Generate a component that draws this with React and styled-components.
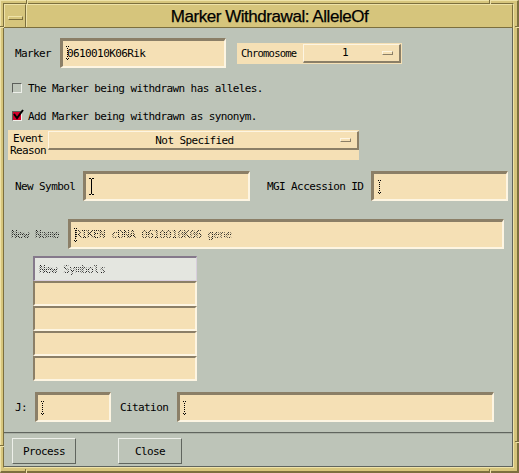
import React from 'react'
import styled, { createGlobalStyle } from 'styled-components'

const sage = '#bdc4b8'
const tan = '#f5e0b5'
const gold = '#d6c57c'
const goldDark = '#7c6f3e'
const goldLight = '#eee2a8'
const bevelDark = '#8b7f67'
const bevelLight = '#fdf5e2'
const sageDark = '#60655e'
const sageLight = '#eef0ea'

const GlobalStyle = createGlobalStyle`
  html, body {
    margin: 0;
    padding: 0;
    background: ${gold};
  }
`

const DottedCaret = () => (
  <svg width="5" height="14" viewBox="0 0 5 14">
    <rect x="1" y="0" width="1" height="1" fill="#000" />
    <rect x="3" y="0" width="1" height="1" fill="#000" />
    {[2, 4, 6, 8, 10].map((y) => (
      <rect key={y} x="2" y={y} width="1" height="1" fill="#000" />
    ))}
    <rect x="1" y="12" width="1" height="1" fill="#000" />
    <rect x="3" y="12" width="1" height="1" fill="#000" />
    <rect x="2" y="13" width="1" height="1" fill="#000" />
  </svg>
)

const SolidCaret = () => (
  <svg width="5" height="17" viewBox="0 0 5 17">
    <rect x="0" y="0" width="2" height="1" fill="#000" />
    <rect x="3" y="0" width="2" height="1" fill="#000" />
    <rect x="2" y="1" width="1" height="15" fill="#000" />
    <rect x="0" y="16" width="2" height="1" fill="#000" />
    <rect x="3" y="16" width="2" height="1" fill="#000" />
  </svg>
)

const CheckMark = () => (
  <svg width="13" height="12" viewBox="0 0 13 12">
    <path d="M2 5 L5 9 L11 1" stroke="#000" strokeWidth="2" fill="none" />
  </svg>
)

const Frame = styled.div`
  position: relative;
  box-sizing: border-box;
  width: 519px;
  height: 473px;
  background: ${gold};
  border-top: 1px solid ${goldLight};
  border-left: 1px solid ${goldLight};
  border-right: 2px solid ${goldDark};
  border-bottom: 2px solid ${goldDark};
  padding: 2px 3px 3px 2px;
`

const Tick = styled.div`
  position: absolute;
  background: ${goldDark};
  box-shadow: 1px 1px 0 ${goldLight};
`

const Inner = styled.div`
  box-sizing: border-box;
  height: 100%;
  border-top: 1px solid ${goldDark};
  border-left: 1px solid ${goldDark};
  border-right: 1px solid ${goldLight};
  border-bottom: 1px solid ${goldLight};
  display: flex;
  flex-direction: column;
`

const TitleBar = styled.div`
  box-sizing: border-box;
  height: 24px;
  flex-shrink: 0;
  display: flex;
  border-bottom: 1px solid ${goldDark};
`

const TitleCell = styled.div`
  box-sizing: border-box;
  width: ${(p) => (p.$w ? `${p.$w}px` : 'auto')};
  flex: ${(p) => (p.$w ? '0 0 auto' : '1')};
  border-top: 1px solid ${goldLight};
  border-left: 1px solid ${goldLight};
  border-right: 1px solid ${goldDark};
  display: flex;
  align-items: center;
  justify-content: center;
`

const MenuGlyph = styled.div`
  box-sizing: border-box;
  width: 15px;
  height: 4px;
  margin-top: 3px;
  border-top: 1px solid ${goldLight};
  border-left: 1px solid ${goldLight};
  border-bottom: 1px solid ${goldDark};
  border-right: 1px solid ${goldDark};
`

const Title = styled.span`
  font-family: 'Liberation Sans', Arial, sans-serif;
  font-size: 17px;
  letter-spacing: -0.45px;
  -webkit-text-stroke: 0.25px #000;
  color: #000;
  padding-top: 1px;
`

const Body = styled.div`
  box-sizing: border-box;
  flex: 1;
  background: ${sage};
  border-right: 1px solid ${sageDark};
  border-bottom: 1px solid ${sageDark};
  display: flex;
  flex-direction: column;
  font-family: 'DejaVu Sans Mono', 'Liberation Mono', monospace;
  font-size: 11px;
  letter-spacing: -0.6px;
  color: #000;
`

const Row = styled.div`
  display: flex;
  align-items: center;
  flex-shrink: 0;
  height: ${(p) => p.$h}px;
  margin-top: ${(p) => p.$mt}px;
  padding-left: ${(p) => p.$pl || 0}px;
`

const Label = styled.span`
  flex-shrink: 0;
  width: ${(p) => p.$w}px;
  margin-left: ${(p) => p.$ml || 0}px;
  white-space: nowrap;
`

const Stipple = styled.span`
  background: repeating-conic-gradient(#111 0 25%, transparent 0 50%) 0 0 / 2px 2px;
  -webkit-background-clip: text;
  background-clip: text;
  color: transparent;
`

const TextField = styled.div`
  position: relative;
  box-sizing: border-box;
  flex-shrink: 0;
  width: ${(p) => p.$w}px;
  height: 30px;
  margin-left: ${(p) => p.$ml || 0}px;
  background: ${tan};
  border-top: 3px solid ${bevelDark};
  border-left: 3px solid ${bevelDark};
  border-bottom: 2px solid ${bevelLight};
  border-right: 2px solid ${bevelLight};
  padding-left: 4px;
  display: flex;
  align-items: center;
  white-space: nowrap;
`

const Caret = styled.div`
  position: absolute;
  left: ${(p) => p.$left}px;
  top: ${(p) => p.$top}px;
  line-height: 0;
`

const OptionBox = styled.div`
  box-sizing: border-box;
  flex-shrink: 0;
  display: flex;
  align-items: center;
  width: 165px;
  height: 21px;
  margin-left: 11px;
  padding: 1px;
  background: ${tan};
`

const OptionLabel = styled.span`
  width: 65px;
  padding-left: 3px;
  box-sizing: border-box;
  font-size: 10.5px;
  letter-spacing: -0.8px;
`

const OptionButton = styled.div`
  box-sizing: border-box;
  display: flex;
  align-items: center;
  flex: 1;
  height: ${(p) => p.$h}px;
  margin-top: ${(p) => p.$mt || 0}px;
  background: ${tan};
  border-top: 1px solid ${bevelLight};
  border-left: 1px solid ${bevelLight};
  border-bottom: 2px solid ${bevelDark};
  border-right: 2px solid ${bevelDark};
`

const OptionValue = styled.span`
  flex: 1;
  text-align: center;
  padding-left: ${(p) => p.$pl || 0}px;
`

const Indicator = styled.div`
  box-sizing: border-box;
  width: 11px;
  height: 4px;
  margin-right: ${(p) => p.$mr}px;
  border-top: 1px solid ${bevelLight};
  border-left: 1px solid ${bevelLight};
  border-bottom: 1px solid ${bevelDark};
  border-right: 1px solid ${bevelDark};
`

const CheckRow = styled.div`
  display: flex;
  align-items: center;
  height: 14px;
  margin-top: ${(p) => p.$mt}px;
  padding-left: 8px;
  white-space: nowrap;
`

const CheckBox = styled.div`
  position: relative;
  box-sizing: border-box;
  width: 10px;
  height: 10px;
  margin-right: 6px;
  flex-shrink: 0;
  background: ${(p) => (p.$on ? '#d4002a' : sage)};
  border-top: 1px solid #5c5f5a;
  border-left: 1px solid #5c5f5a;
  border-bottom: 1px solid ${sageLight};
  border-right: 1px solid ${sageLight};
`

const CheckIcon = styled.div`
  position: absolute;
  left: -1px;
  top: -3px;
  line-height: 0;
`

const EventPanel = styled.div`
  box-sizing: border-box;
  display: flex;
  align-items: flex-start;
  width: 351px;
  height: 30px;
  margin: 7px 0 0 4px;
  background: ${tan};
  flex-shrink: 0;
`

const EventLabel = styled.div`
  width: 40px;
  padding-top: 3px;
  text-align: center;
  line-height: 12px;
  font-size: 11px;
`

const Table = styled.div`
  box-sizing: border-box;
  width: 164px;
  margin: 7px 0 0 29px;
  flex-shrink: 0;
`

const TableHeader = styled.div`
  box-sizing: border-box;
  height: 25px;
  padding-left: 4px;
  display: flex;
  align-items: center;
  background: #e4e6e0;
  border-top: 2px solid #85798b;
  border-left: 2px solid #85798b;
  border-bottom: 1px solid #d8cedd;
  border-right: 1px solid #d8cedd;
`

const TableRow = styled.div`
  box-sizing: border-box;
  height: 25px;
  background: ${tan};
  border-top: 2px solid ${bevelDark};
  border-left: 2px solid ${bevelDark};
  border-bottom: 2px solid ${bevelLight};
  border-right: 2px solid ${bevelLight};
`

const Separator = styled.div`
  height: 1px;
  margin-top: 10px;
  background: ${sageDark};
  border-bottom: 1px solid #a9afa4;
  flex-shrink: 0;
`

const ButtonRow = styled.div`
  display: flex;
  margin-top: 4px;
  padding-left: 8px;
`

const Button = styled.div`
  box-sizing: border-box;
  width: 64px;
  height: 26px;
  margin-left: ${(p) => p.$ml || 0}px;
  display: flex;
  align-items: center;
  justify-content: center;
  background: ${sage};
  border-top: 1px solid ${sageLight};
  border-left: 1px solid ${sageLight};
  border-bottom: 1px solid ${sageDark};
  border-right: 1px solid ${sageDark};
`

export default function App() {
  return (
    <>
      <GlobalStyle />
      <Frame>
        <Tick style={{ left: 25, top: -1, width: 1, height: 3 }} />
        <Tick style={{ left: 488, top: -1, width: 1, height: 3 }} />
        <Tick style={{ left: -1, top: 25, width: 3, height: 1 }} />
        <Tick style={{ right: -2, top: 25, width: 4, height: 1 }} />
        <Tick style={{ left: -1, top: 444, width: 3, height: 1 }} />
        <Tick style={{ right: -2, top: 440, width: 4, height: 1 }} />
        <Tick style={{ left: 24, bottom: -2, width: 1, height: 4 }} />
        <Tick style={{ left: 488, bottom: -2, width: 1, height: 4 }} />
        <Inner>
          <TitleBar>
            <TitleCell $w={22}>
              <MenuGlyph />
            </TitleCell>
            <TitleCell>
              <Title>Marker Withdrawal: AlleleOf</Title>
            </TitleCell>
          </TitleBar>
          <Body>
            <Row $h={30} $mt={10} $pl={11}>
              <Label $w={45}>Marker</Label>
              <TextField $w={166}>
                <Caret $left={2} $top={5}><DottedCaret /></Caret>
                <span>0610010K06Rik</span>
              </TextField>
              <OptionBox>
                <OptionLabel>Chromosome</OptionLabel>
                <OptionButton $h={19}>
                  <OptionValue $pl={4}>1</OptionValue>
                  <Indicator $mr={6} />
                </OptionButton>
              </OptionBox>
            </Row>

            <CheckRow $mt={13}>
              <CheckBox />
              <span>The Marker being withdrawn has alleles.</span>
            </CheckRow>
            <CheckRow $mt={14}>
              <CheckBox $on>
                <CheckIcon><CheckMark /></CheckIcon>
              </CheckBox>
              <span>Add Marker being withdrawn as synonym.</span>
            </CheckRow>

            <EventPanel>
              <EventLabel>Event<br />Reason</EventLabel>
              <OptionButton $h={19} $mt={1}>
                <OptionValue>Not Specified</OptionValue>
                <Indicator $mr={6} />
              </OptionButton>
            </EventPanel>

            <Row $h={30} $mt={11} $pl={11}>
              <Label $w={68}>New Symbol</Label>
              <TextField $w={167}>
                <Caret $left={3} $top={4}><SolidCaret /></Caret>
              </TextField>
              <Label $w={104} $ml={17}>MGI Accession ID</Label>
              <TextField $w={137}>
                <Caret $left={3} $top={6}><DottedCaret /></Caret>
              </TextField>
            </Row>

            <Row $h={30} $mt={18} $pl={7}>
              <Label $w={57}><Stipple>New Name</Stipple></Label>
              <TextField $w={436}>
                <Caret $left={2} $top={6}><DottedCaret /></Caret>
                <Stipple>RIKEN cDNA 0610010K06 gene</Stipple>
              </TextField>
            </Row>

            <Table>
              <TableHeader><Stipple>New Symbols</Stipple></TableHeader>
              <TableRow />
              <TableRow />
              <TableRow />
              <TableRow />
            </Table>

            <Row $h={30} $mt={11} $pl={11}>
              <Label $w={20}>J:</Label>
              <TextField $w={76}>
                <Caret $left={2} $top={6}><DottedCaret /></Caret>
              </TextField>
              <Label $w={57} $ml={9}>Citation</Label>
              <TextField $w={317}>
                <Caret $left={2} $top={6}><DottedCaret /></Caret>
              </TextField>
            </Row>

            <Separator />

            <ButtonRow>
              <Button>Process</Button>
              <Button $ml={42}>Close</Button>
            </ButtonRow>
          </Body>
        </Inner>
      </Frame>
    </>
  )
}
